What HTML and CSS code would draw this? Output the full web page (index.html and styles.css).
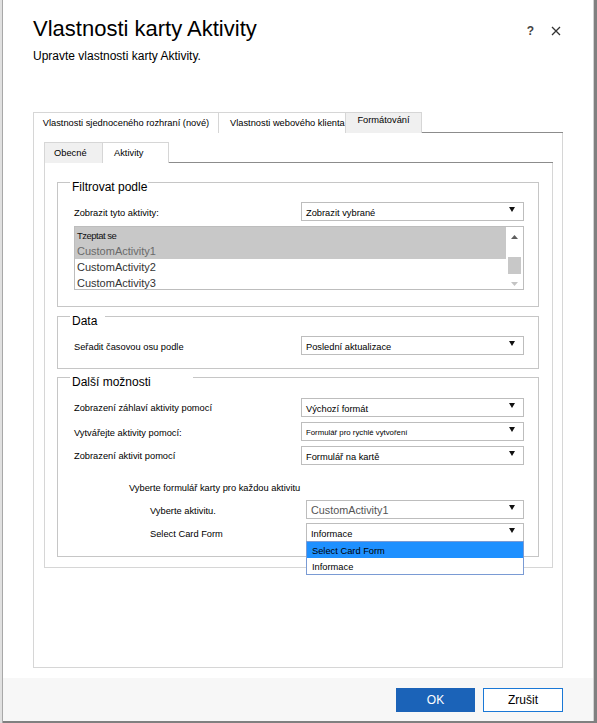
FILE: index.html
```html
<!DOCTYPE html>
<html lang="cs">
<head>
<meta charset="utf-8">
<title>Vlastnosti karty Aktivity</title>
<link rel="stylesheet" href="styles.css">
</head>
<body>
<div class="page">
  <div class="dialog">
    <header class="head">
      <div class="head-text">
        <h1 class="title">Vlastnosti karty Aktivity</h1>
        <p class="subtitle">Upravte vlastnosti karty Aktivity.</p>
      </div>
      <div class="head-actions">
        <span class="help">?</span>
        <svg class="close" width="10" height="10" viewBox="0 0 10 10"><path d="M1 1L9 9M9 1L1 9" stroke="#333" stroke-width="1.3" fill="none"/></svg>
      </div>
    </header>

    <main class="content">
      <div class="tabstrip">
        <div class="tab tab--active tab--uci">Vlastnosti sjednoceného rozhraní (nové)</div>
        <div class="tab tab--web">Vlastnosti webového klienta</div>
        <div class="tab tab--gray tab--fmt">Formátování</div>
        <div class="tab-fill"></div>
      </div>
      <div class="panel panel--outer">
        <div class="tabstrip">
          <div class="tab tab--gray tab--general">Obecné</div>
          <div class="tab tab--active tab--acts">Aktivity</div>
          <div class="tab-fill"></div>
        </div>
        <div class="panel panel--inner">

          <section class="group">
            <h3 class="group-title group-title--filter">Filtrovat podle</h3>
            <div class="row">
              <span class="label label--low">Zobrazit tyto aktivity:</span>
              <div class="select"><span>Zobrazit vybrané</span><svg class="caret" width="6" height="5" viewBox="0 0 6 5"><polygon points="0,0 6,0 3,5" fill="#111"/></svg></div>
            </div>
            <div class="listbox">
              <ul class="list-items">
                <li class="item item--small item--selected">Tzeptat se</li>
                <li class="item item--selected item--muted">CustomActivity1</li>
                <li class="item">CustomActivity2</li>
                <li class="item">CustomActivity3</li>
              </ul>
              <div class="scrollbar">
                <svg class="sb-up" width="7" height="4" viewBox="0 0 7 4"><polygon points="0,4 7,4 3.5,0" fill="#5f5f5f"/></svg>
                <div class="sb-thumb"></div>
                <svg class="sb-down" width="7" height="4" viewBox="0 0 7 4"><polygon points="0,0 7,0 3.5,4" fill="#c4c4c4"/></svg>
              </div>
            </div>
          </section>

          <section class="group group--data">
            <h3 class="group-title group-title--data">Data</h3>
            <div class="row">
              <span class="label label--low">Seřadit časovou osu podle</span>
              <div class="select"><span>Poslední aktualizace</span><svg class="caret" width="6" height="5" viewBox="0 0 6 5"><polygon points="0,0 6,0 3,5" fill="#111"/></svg></div>
            </div>
          </section>

          <section class="group group--more">
            <h3 class="group-title group-title--more">Další možnosti</h3>
            <div class="row">
              <span class="label">Zobrazení záhlaví aktivity pomocí</span>
              <div class="select"><span>Výchozí formát</span><svg class="caret" width="6" height="5" viewBox="0 0 6 5"><polygon points="0,0 6,0 3,5" fill="#111"/></svg></div>
            </div>
            <div class="row">
              <span class="label label--low">Vytvářejte aktivity pomocí:</span>
              <div class="select"><span class="value--tiny">Formulář pro rychlé vytvoření</span><svg class="caret" width="6" height="5" viewBox="0 0 6 5"><polygon points="0,0 6,0 3,5" fill="#111"/></svg></div>
            </div>
            <div class="row">
              <span class="label">Zobrazení aktivit pomocí</span>
              <div class="select"><span>Formulář na kartě</span><svg class="caret" width="6" height="5" viewBox="0 0 6 5"><polygon points="0,0 6,0 3,5" fill="#111"/></svg></div>
            </div>

            <p class="subhead">Vyberte formulář karty pro každou aktivitu</p>
            <div class="subrow">
              <span class="label label--low">Vyberte aktivitu.</span>
              <div class="select select--sub"><span class="value--large">CustomActivity1</span><svg class="caret" width="6" height="5" viewBox="0 0 6 5"><polygon points="0,0 6,0 3,5" fill="#111"/></svg></div>
            </div>
            <div class="subrow">
              <span class="label label--low">Select Card Form</span>
              <div class="select select--sub">
                <span>Informace</span><svg class="caret" width="6" height="5" viewBox="0 0 6 5"><polygon points="0,0 6,0 3,5" fill="#111"/></svg>
                <ul class="popup">
                  <li class="popup-item popup-item--active">Select Card Form</li>
                  <li class="popup-item">Informace</li>
                </ul>
              </div>
            </div>
          </section>

        </div>
      </div>
    </main>

    <footer class="foot">
      <button class="btn btn--primary">OK</button>
      <button class="btn btn--secondary">Zrušit</button>
    </footer>
  </div>
</div>
</body>
</html>
```

FILE: styles.css
```css
* {
  box-sizing: border-box;
  margin: 0;
  padding: 0;
}

html, body {
  width: 597px;
  height: 723px;
  overflow: hidden;
}

body {
  font-family: "Liberation Sans", Arial, sans-serif;
  font-size: 9.3px;
  color: #000;
  background: #7d7d7d;
}

.page {
  display: flex;
  height: 723px;
  background: linear-gradient(to right, #e0e0e0 0, #e0e0e0 2px, #a8a8a8 2px, #a8a8a8 3px, #808080 3px);
}

.dialog {
  margin-left: 3px;
  width: 591px;
  height: 721px;
  background: #fff;
  border-right: 1px solid #d2d2d2;
  display: flex;
  flex-direction: column;
}

/* header */
.head {
  display: flex;
  justify-content: space-between;
  align-items: flex-start;
  padding: 16px 32px 0 30px;
}

.title {
  font-size: 22px;
  font-weight: normal;
  line-height: 26px;
}

.subtitle {
  font-size: 12px;
  line-height: 16px;
  margin-top: 6px;
}

.head-actions {
  display: flex;
  align-items: center;
  gap: 17px;
  height: 26px;
  margin-top: 2px;
}

.help {
  font-size: 12px;
  font-weight: bold;
  color: #444;
  line-height: 12px;
}

.close {
  display: block;
}

/* content */
.content {
  flex: 1;
  display: flex;
  flex-direction: column;
  padding: 48px 30px 10px 30px;
}

.tabstrip {
  display: flex;
  height: 21px;
  flex: none;
}

.tab {
  height: 21px;
  border: 1px solid #d6d6d6;
  border-bottom: none;
  background: #fff;
  white-space: nowrap;
  overflow: hidden;
  line-height: 20px;
}

.tab + .tab {
  border-left: none;
}

.tab--gray {
  background: #f0f0f0;
}

.tab-fill {
  flex: 1;
  border-bottom: 1px solid #8c8c8c;
}

.tab--uci {
  width: 186px;
  text-align: center;
}

.tab--web {
  width: 127px;
  padding-left: 11px;
}

.tab--fmt {
  width: 76px;
  text-align: center;
  line-height: 15px;
}

.tab--general {
  width: 59px;
  padding-left: 9px;
  line-height: 21px;
}

.tab--acts {
  width: 66px;
  padding-left: 11px;
  line-height: 21px;
}

.panel {
  border: 1px solid #d6d6d6;
  border-top: none;
}

.panel--outer {
  flex: 1;
  padding: 9px 9px 0 10px;
}

.panel--inner {
  padding: 19px 13px 10px 12px;
}

/* groups */
.group {
  border: 1px solid #c6c6c6;
  padding: 0 14px 16px 16px;
}

.group--data {
  margin-top: 9px;
  padding-bottom: 13px;
}

.group--more {
  margin-top: 8px;
  padding-bottom: 14px;
}

.group-title {
  font-size: 12px;
  font-weight: normal;
  line-height: 10px;
  height: 10px;
  margin: -1px 0 10px -4px;
  padding: 0 2px;
  background: #fff;
  white-space: nowrap;
}

.group-title--filter { width: 78px; }
.group-title--data { width: 35px; }
.group-title--more { width: 123px; margin-bottom: 11px; }

.row {
  display: grid;
  grid-template-columns: 227px 1fr;
  align-items: center;
}

.row + .row {
  margin-top: 5px;
}

.label {
  white-space: nowrap;
  line-height: 12px;
}

.label--low {
  padding-top: 3px;
}

.select {
  position: relative;
  height: 19px;
  border: 1px solid #bdbdbd;
  background: #fff;
  display: flex;
  justify-content: space-between;
  align-items: flex-start;
  padding: 3px 8px 0 4px;
  line-height: 14px;
  white-space: nowrap;
}

.caret {
  display: block;
  margin-top: 1px;
  flex: none;
}

.value--tiny {
  font-size: 7.8px;
}

.value--large {
  font-size: 10.8px;
  color: #555;
  line-height: 13px;
}

/* listbox */
.listbox {
  margin-top: 5px;
  height: 64px;
  border: 1px solid #bdbdbd;
  display: flex;
  overflow: hidden;
}

.list-items {
  flex: 1;
  list-style: none;
  overflow: hidden;
}

.item {
  height: 16px;
  line-height: 16px;
  padding-left: 2px;
  font-size: 11px;
  color: #333;
  white-space: nowrap;
}

.item--small {
  font-size: 9.5px;
  letter-spacing: -0.5px;
  color: #111;
  line-height: 18px;
}

.item--selected {
  background: #c8c8c8;
}

.item--muted {
  color: #6a6a6a;
}

.scrollbar {
  width: 17px;
  flex: none;
  display: flex;
  flex-direction: column;
  align-items: center;
  padding-top: 8px;
}

.sb-up, .sb-down {
  display: block;
}

.sb-thumb {
  margin-top: 18px;
  width: 13px;
  height: 17px;
  background: #c8c8c8;
}

.sb-down {
  margin-top: 8px;
}

/* sub section */
.subhead {
  margin-top: 17px;
  padding-left: 55px;
  line-height: 12px;
}

.subrow {
  display: grid;
  grid-template-columns: 156px 218px;
  padding-left: 76px;
  align-items: center;
  margin-top: 4px;
}

.subhead + .subrow {
  margin-top: 6px;
}

/* popup */
.popup {
  position: absolute;
  top: 100%;
  left: -1px;
  right: -1px;
  list-style: none;
  background: #fff;
  border: 1px solid #7a9bd4;
  z-index: 2;
}

.popup-item {
  height: 16px;
  line-height: 19px;
  padding-left: 5px;
  overflow: hidden;
}

.popup-item--active {
  background: #1e90ff;
}

/* footer */
.foot {
  height: 43px;
  flex: none;
  background: #f7f7f7;
  display: flex;
  justify-content: flex-end;
  align-items: flex-start;
  gap: 8px;
  padding: 10px 30px 0 0;
}

.btn {
  height: 24px;
  font-family: "Liberation Sans", Arial, sans-serif;
  font-size: 12px;
  cursor: pointer;
}

.btn--primary {
  width: 79px;
  background: #1b63b8;
  border: 1px solid #1b63b8;
  color: #fff;
}

.btn--secondary {
  width: 80px;
  background: #fff;
  border: 1px solid #1a78d6;
  color: #000;
}
```
